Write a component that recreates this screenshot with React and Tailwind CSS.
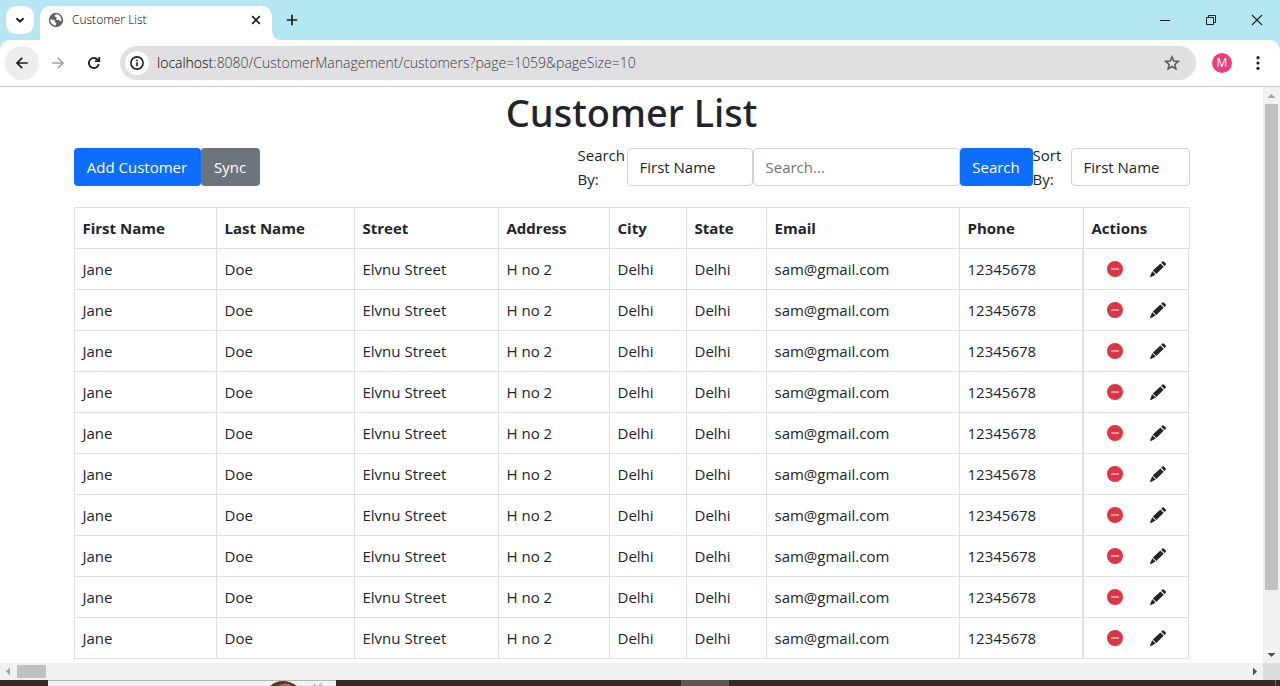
import { BsDashCircleFill } from "react-icons/bs";

const columns = [
  { label: "First Name", width: "w-[142px]" },
  { label: "Last Name", width: "w-[138px]" },
  { label: "Street", width: "w-36" },
  { label: "Address", width: "w-[111px]" },
  { label: "City", width: "w-[77px]" },
  { label: "State", width: "w-20" },
  { label: "Email", width: "w-[193px]" },
  { label: "Phone", width: "w-[124px]" },
  { label: "Actions", width: "w-[106px]" },
];

const customers = Array.from({ length: 10 }, (_, id) => ({
  id,
  values: ["Jane", "Doe", "Elvnu Street", "H no 2", "Delhi", "Delhi", "sam@gmail.com", "12345678"],
}));

function Stroke({ d, size = 16, width = 2, className = "" }) {
  return (
    <svg width={size} height={size} viewBox="0 0 16 16" fill="none" stroke="currentColor" strokeWidth={width} className={className} aria-hidden="true">
      <path d={d} />
    </svg>
  );
}

function PencilIcon() {
  return (
    <svg width="16" height="16" viewBox="0 0 16 16" fill="currentColor" aria-hidden="true">
      <path d="M12.400.5Q13-.1 13.700.4L15.800 2.400Q16.300 3.100 15.700 3.700L14.500 4.900 11.200 1.700zM10.400 2.500 13.700 5.700 6.400 13 2.800 9.600zM2.200 10.300 5.700 13.600 1 15.900Q0 16.100.2 15z" />
    </svg>
  );
}

function TabStrip() {
  return (
    <header className="flex h-10 shrink-0 items-center bg-[#b5e7f2] pl-1.5 text-[#1f1f1f]">
      <button aria-label="Search tabs" className="flex size-7 items-center justify-center rounded-[10px] bg-white">
        <Stroke d="m4.5 6.2 3.5 3.5 3.5-3.5" />
      </button>
      <div className="ml-1.5 flex h-[34px] w-58 items-center self-end rounded-t-[10px] bg-white pr-2 pb-1.5 pl-2">
        <svg width="16" height="16" viewBox="0 0 16 16" aria-hidden="true">
          <circle cx="8" cy="8" r="7.2" fill="#5f6368" />
          <path d="M2.3 7.5c2 .1 3.5.2 4.4 1.2.7.8.1 1.800 1.200 2.200.9.300.4 1.600-.5 2.500-2.800-.3-5.200-2.600-5.100-5.900M8.300 2.300c-1.400.8-1.800 1.400-1.400 2.200.4.700 1.500.1 1.800 1 .4 1.100-1.100 1.200-.3 2.200.8.800 2.500.2 3.200 1 .5.600.9.600 1.700.4.600-2.700-.8-6.600-5-6.800" fill="#fff" />
        </svg>
        <span className="ml-2 grow text-xs font-light text-black">Customer List</span>
        <button aria-label="Close tab" className="flex size-4 items-center justify-center">
          <Stroke d="m4.2 4.2 7.6 7.6m0-7.6-7.6 7.6" width={1.7} />
        </button>
      </div>
      <svg width="10" height="10" viewBox="0 0 10 10" className="self-end" aria-hidden="true">
        <path d="M0 0q0 10 10 10H0z" fill="#fff" />
      </svg>
      <button aria-label="New tab" className="ml-0.5 flex size-4 items-center justify-center">
        <Stroke d="M8 2.8v10.4M2.8 8h10.4" width={1.7} />
      </button>
      <div className="ml-auto flex">
        <button aria-label="Minimize" className="flex h-10 w-[46px] items-center justify-center">
          <Stroke d="M3 8.5h10" width={1} />
        </button>
        <button aria-label="Restore" className="flex h-10 w-[46px] items-center justify-center">
          <Stroke d="M3.5 5.5h7v7h-7zM5.5 5.500v-2h7v7h-2" width={1} />
        </button>
        <button aria-label="Close" className="flex h-10 w-[46px] items-center justify-center">
          <Stroke d="m3 3 10 10m0-10-10 10" width={1.1} />
        </button>
      </div>
    </header>
  );
}

function Toolbar() {
  return (
    <nav className="shrink-0 bg-[#b5e7f2]">
      <div className="flex h-[47px] items-center rounded-t-[10px] border-b border-[#c9c9cb] bg-white pr-3.5 pl-[5px] text-[#1f1f1f]">
        <button aria-label="Back" className="flex size-[34px] items-center justify-center rounded-full bg-[#ededee]">
          <Stroke d="M13.800 8H3m5.200-5.200L3 8l5.200 5.200" width={1.7} />
        </button>
        <button aria-label="Forward" className="ml-[11px] text-[#a2a2a4]">
          <Stroke d="M2.200 8H13M7.800 2.800 13 8l-5.200 5.200" width={1.6} />
        </button>
        <button aria-label="Reload" className="ml-5">
          <Stroke d="M12.800 9A5 5 0 1 1 12 5.100M13.300 2v4.200H9" width={1.8} />
        </button>
        <div className="ml-[18px] flex h-[34px] grow items-center rounded-full bg-[#e0e0e2] pr-4 pl-[5px]">
          <button aria-label="Site information" className="flex size-6 items-center justify-center rounded-full bg-white">
            <svg width="16" height="16" viewBox="0 0 16 16" aria-hidden="true">
              <circle cx="8" cy="8" r="6.100" fill="none" stroke="currentColor" strokeWidth="1.600" />
              <path d="M7.200 7.200h1.600v4H7.200zM7.200 4.700h1.600v1.500H7.200z" fill="currentColor" />
            </svg>
          </button>
          <span className="ml-2 grow text-sm font-light text-[#3c3d40]">
            <span className="text-black">localhost</span>:8080/CustomerManagement/customers?page=1059&amp;pageSize=10
          </span>
          <button aria-label="Bookmark" className="text-[#5a5a5d]">
            <Stroke d="m8 1.800 1.750 4.200 4.550.4-3.450 3 1.050 4.450L8 11.500l-3.900 2.350 1.050-4.450-3.450-3L6.250 6z" width={1.5} />
          </button>
        </div>
        <button className="ml-4 flex size-5 items-center justify-center rounded-full bg-[#ec3d7d] text-xs text-white">M</button>
        <button aria-label="Menu" className="ml-[18px]">
          <svg width="16" height="16" viewBox="0 0 16 16" fill="currentColor" aria-hidden="true">
            <circle cx="8" cy="2.700" r="1.600" /><circle cx="8" cy="8" r="1.600" /><circle cx="8" cy="13.300" r="1.600" />
          </svg>
        </button>
      </div>
    </nav>
  );
}

function Arrow({ d, className }) {
  return (
    <svg width="17" height="17" viewBox="0 0 17 17" fill="currentColor" className={className} aria-hidden="true">
      <path d={d} />
    </svg>
  );
}

const field = "h-[38px] appearance-none rounded-[4px] border border-[#ced4da] bg-white px-3 text-[#212529] placeholder:text-[#6c757d]";

function Filters() {
  return (
    <div className="flex items-center justify-between">
      <div className="flex h-12 items-center">
        <button className="h-[38px] w-[127px] rounded-[4px] bg-[#0d6efd] text-white">Add Customer</button>
        <button className="h-[38px] w-[59px] rounded-[4px] bg-[#6c757d] text-white">Sync</button>
      </div>
      <form className="flex items-center">
        <label htmlFor="search-by" className="w-[49px]">Search By:</label>
        <select id="search-by" className={`${field} w-[126px]`}><option>First Name</option></select>
        <input aria-label="Search text" placeholder="Search..." className={`${field} w-[207px]`} />
        <button type="button" className="h-[38px] w-[73px] rounded-[4px] bg-[#0d6efd] text-white">Search</button>
        <label htmlFor="sort-by" className="w-[38px]">Sort<br />By:</label>
        <select id="sort-by" className={`${field} w-[119px]`}><option>First Name</option></select>
      </form>
    </div>
  );
}

function CustomerTable() {
  return (
    <table className="mt-4 w-full table-fixed border-collapse text-left">
      <thead>
        <tr>
          {columns.map(({ label, width }) => (
            <th key={label} className={`${width} border border-[#dee2e6] px-2 py-2 font-bold`}>{label}</th>
          ))}
        </tr>
      </thead>
      <tbody>
        {customers.map(({ id, values }) => (
          <tr key={id}>
            {values.map((value, i) => (
              <td key={i} className="border border-[#dee2e6] px-2 py-2">{value}</td>
            ))}
            <td className="border border-r-0 border-l-2 border-[#dee2e6] p-0">
              <div className="flex h-10 items-center gap-[27px] border-r border-[#dee2e6] pl-[23px]">
                <button aria-label="Delete customer" className="text-[#dc3545]"><BsDashCircleFill size={16} /></button>
                <button aria-label="Edit customer"><PencilIcon /></button>
              </div>
            </td>
          </tr>
        ))}
      </tbody>
    </table>
  );
}

export default function App() {
  return (
    <div className="flex h-screen flex-col overflow-hidden bg-white font-['Open_Sans',sans-serif]">
      <TabStrip />
      <Toolbar />
      <div className="flex min-h-0 grow">
        <main className="min-w-0 grow overflow-hidden pt-0.5 text-[15px] leading-6 text-[#212529]">
          <div className="mx-auto max-w-[1140px] px-3">
            <h1 className="mb-2 text-center font-['Noto_Sans',sans-serif] text-[38px] leading-[46px] font-medium">Customer List</h1>
            <Filters />
            <CustomerTable />
          </div>
        </main>
        <div className="flex w-[17px] shrink-0 flex-col items-center bg-[#f1f1f1]">
          <Arrow d="M4.500 11h8l-4-4z" className="shrink-0 text-[#a3a3a3]" />
          <div className="h-[486px] w-[13px] bg-[#c1c1c1]" />
          <Arrow d="M4.500 7h8l-4 4z" className="mt-auto shrink-0 text-[#505050]" />
        </div>
      </div>
      <div className="flex h-[17px] shrink-0 items-center bg-[#f1f1f1]">
        <Arrow d="M10 4.500v8l-4-4z" className="text-[#a3a3a3]" />
        <div className="h-[13px] w-[29px] bg-[#c1c1c1]" />
        <Arrow d="M7 4.500v8l4-4z" className="ml-auto text-[#505050]" />
        <div className="size-[17px] bg-[#dcdcdc]" />
      </div>
      <footer className="flex h-1.5 shrink-0 bg-[#342b22]">
        <div className="ml-12 flex w-72 border-t border-[#b5b5b5] bg-[#f2f2f2]">
          <svg width="90" height="6" viewBox="0 0 90 6" className="ml-auto" aria-hidden="true">
            <path d="M23 6Q29 0 37 0t15 6z" fill="#59382a" />
            <path d="M31 6q5-5 12-3l4 3z" fill="#a36e55" />
            <path d="m66 5 3-3 2 3zm6 0 3-4 2 4z" fill="#9fd9e6" />
          </svg>
        </div>
        <div className="ml-[345px] w-12 bg-[#5d5751]" />
        <div className="mr-1 ml-auto w-px bg-[#77736e]" />
      </footer>
    </div>
  );
}
